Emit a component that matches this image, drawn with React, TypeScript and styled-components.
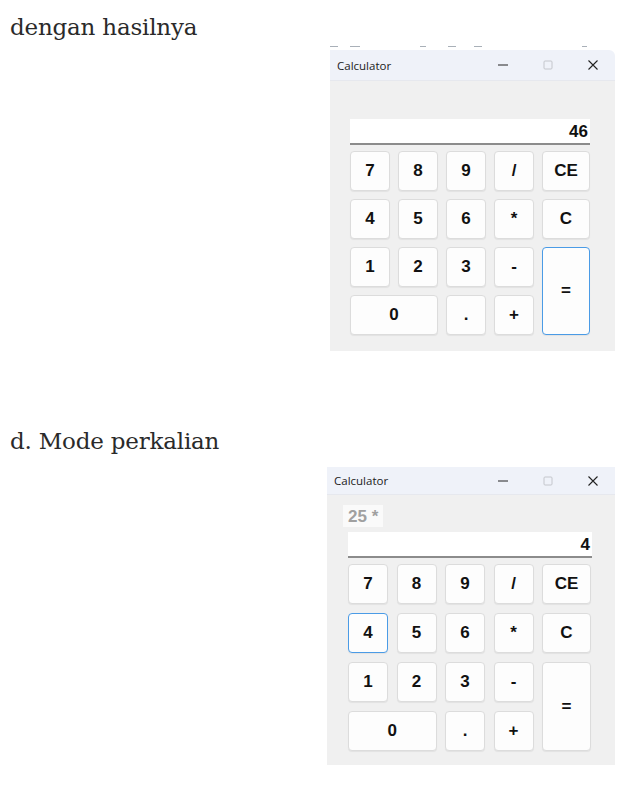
import React from 'react';
import styled, { createGlobalStyle, css } from 'styled-components';

const GlobalStyle = createGlobalStyle`
  body {
    margin: 0;
    background: #ffffff;
  }
`;

const Page = styled.div`
  width: 639px;
  height: 795px;
  overflow: hidden;
  display: flex;
  flex-direction: column;
`;

const Caption = styled.h3<{ $top: number }>`
  margin: ${p => p.$top}px 0 0 10px;
  font-family: 'DejaVu Serif', 'Liberation Serif', serif;
  font-weight: 400;
  font-size: 23px;
  line-height: 30px;
  color: #2a2a2a;
  letter-spacing: -0.2px;
`;

const Shot = styled.div<{ $left: number; $width: number; $top: number }>`
  margin: ${p => p.$top}px 0 0 ${p => p.$left}px;
  width: ${p => p.$width}px;
  display: flex;
  flex-direction: column;
`;

const ScreenEdge = styled.div`
  height: 4px;
  display: flex;
  align-items: flex-start;
`;

const EdgeMark = styled.span<{ $gap: number; $w: number }>`
  margin-left: ${p => p.$gap}px;
  width: ${p => p.$w}px;
  height: 1px;
  background: #a9b0b8;
`;

const TitleBar = styled.div<{ $height: number; $rounded?: boolean }>`
  height: ${p => p.$height}px;
  background: #eff2f9;
  display: flex;
  align-items: center;
  padding-left: 7px;
  border-top-right-radius: ${p => (p.$rounded ? '6px' : '0')};
  border-bottom: 1px solid #e6e8ee;
`;

const TitleText = styled.div`
  font-family: 'Open Sans', 'Noto Sans', sans-serif;
  font-size: 11.5px;
  color: #1b1b1b;
  flex: 1;
`;

const Controls = styled.div`
  display: flex;
  align-items: center;
`;

const Ctrl = styled.div`
  width: 45px;
  display: flex;
  justify-content: center;
  align-items: center;
`;

const Body = styled.div<{ $pad: string }>`
  background: #f0f0f0;
  padding: ${p => p.$pad};
  display: flex;
  flex-direction: column;
`;

const History = styled.div`
  align-self: flex-start;
  margin-left: -5px;
  height: 22px;
  padding: 0 5px;
  background: #fafafa;
  font-family: 'Liberation Sans', Arial, sans-serif;
  font-weight: 700;
  font-size: 17px;
  line-height: 23px;
  color: #a0a0a0;
`;

const Display = styled.div<{ $top: number }>`
  margin-top: ${p => p.$top}px;
  height: 24px;
  background: #ffffff;
  border-bottom: 2px solid #8c8c8c;
  text-align: right;
  font-family: 'Liberation Sans', Arial, sans-serif;
  font-weight: 700;
  font-size: 17px;
  line-height: 25px;
  color: #111;
  padding-right: 2px;
`;

const Keys = styled.div<{ $last: number; $gap: number; $rowGap: number }>`
  margin-top: 6px;
  display: grid;
  grid-template-columns: repeat(4, 40px) ${p => p.$last}px;
  grid-auto-rows: 40px;
  column-gap: ${p => p.$gap}px;
  row-gap: ${p => p.$rowGap}px;
`;

const Key = styled.button<{ $focus?: boolean; $wide?: boolean; $tall?: boolean }>`
  margin: 0;
  padding: 0;
  background: #fdfdfd;
  border: 1px solid #dcdcdc;
  border-radius: 4px;
  box-shadow: 0 1px 1px rgba(0, 0, 0, 0.06);
  font-family: 'Liberation Sans', Arial, sans-serif;
  font-weight: 700;
  font-size: 17px;
  color: #111;
  display: flex;
  align-items: center;
  justify-content: center;
  ${p => p.$wide && css`grid-column: span 2;`}
  ${p => p.$tall && css`grid-row: span 2;`}
  ${p =>
    p.$focus &&
    css`
      border-color: #4a9be6;
    `}
`;

const MinIcon = () => (
  <svg width="12" height="12" viewBox="0 0 12 12">
    <line x1="1" y1="6" x2="11" y2="6" stroke="#222" strokeWidth="1" />
  </svg>
);

const MaxIcon = () => (
  <svg width="12" height="12" viewBox="0 0 12 12">
    <rect x="2" y="2" width="8" height="8" rx="1" fill="none" stroke="#c4c6cc" strokeWidth="1" />
  </svg>
);

const CloseIcon = () => (
  <svg width="12" height="12" viewBox="0 0 12 12">
    <path d="M1.5 1.5 L10.5 10.5 M10.5 1.5 L1.5 10.5" stroke="#222" strokeWidth="1.1" />
  </svg>
);

type KeyDef = { label: string; wide?: boolean; tall?: boolean };

const layout: KeyDef[] = [
  { label: '7' }, { label: '8' }, { label: '9' }, { label: '/' }, { label: 'CE' },
  { label: '4' }, { label: '5' }, { label: '6' }, { label: '*' }, { label: 'C' },
  { label: '1' }, { label: '2' }, { label: '3' }, { label: '-' }, { label: '=', tall: true },
  { label: '0', wide: true }, { label: '.' }, { label: '+' },
];

// bits of the cropped desktop above the first window
const edgeMarks = [
  { gap: 0, w: 8 }, { gap: 12, w: 10 }, { gap: 60, w: 6 },
  { gap: 22, w: 8 }, { gap: 18, w: 8 }, { gap: 100, w: 5 },
];

interface CalcProps {
  value: string;
  history?: string;
  focused: string;
  titleHeight: number;
  bodyPad: string;
  displayTop: number;
  lastCol: number;
  gap: number;
  rowGap: number;
  rounded?: boolean;
}

const Calculator: React.FC<CalcProps> = ({
  value,
  history,
  focused,
  titleHeight,
  bodyPad,
  displayTop,
  lastCol,
  gap,
  rowGap,
  rounded,
}) => (
  <>
    <TitleBar $height={titleHeight} $rounded={rounded}>
      <TitleText>Calculator</TitleText>
      <Controls>
        <Ctrl><MinIcon /></Ctrl>
        <Ctrl><MaxIcon /></Ctrl>
        <Ctrl><CloseIcon /></Ctrl>
      </Controls>
    </TitleBar>
    <Body $pad={bodyPad}>
      {history && <History>{history}</History>}
      <Display $top={displayTop}>{value}</Display>
      <Keys $last={lastCol} $gap={gap} $rowGap={rowGap}>
        {layout.map(k => (
          <Key key={k.label} $wide={k.wide} $tall={k.tall} $focus={k.label === focused}>
            {k.label}
          </Key>
        ))}
      </Keys>
    </Body>
  </>
);

export default function App() {
  return (
    <Page>
      <GlobalStyle />
      <Caption $top={12}>dengan hasilnya</Caption>
      <Shot $left={330} $width={285} $top={4}>
        <ScreenEdge>
          {edgeMarks.map((m, i) => (
            <EdgeMark key={i} $gap={m.gap} $w={m.w} />
          ))}
        </ScreenEdge>
        <Calculator
          value="46"
          focused="="
          titleHeight={30}
          bodyPad="0 25px 16px 20px"
          displayTop={38}
          lastCol={48}
          gap={8}
          rowGap={8}
          rounded
        />
      </Shot>
      <Caption $top={75}>d. Mode perkalian</Caption>
      <Shot $left={327} $width={288} $top={11}>
        <Calculator
          value="4"
          history="25 *"
          focused="4"
          titleHeight={27}
          bodyPad="10px 23px 14px 21px"
          displayTop={5}
          lastCol={49}
          gap={8.5}
          rowGap={9}
        />
      </Shot>
    </Page>
  );
}
